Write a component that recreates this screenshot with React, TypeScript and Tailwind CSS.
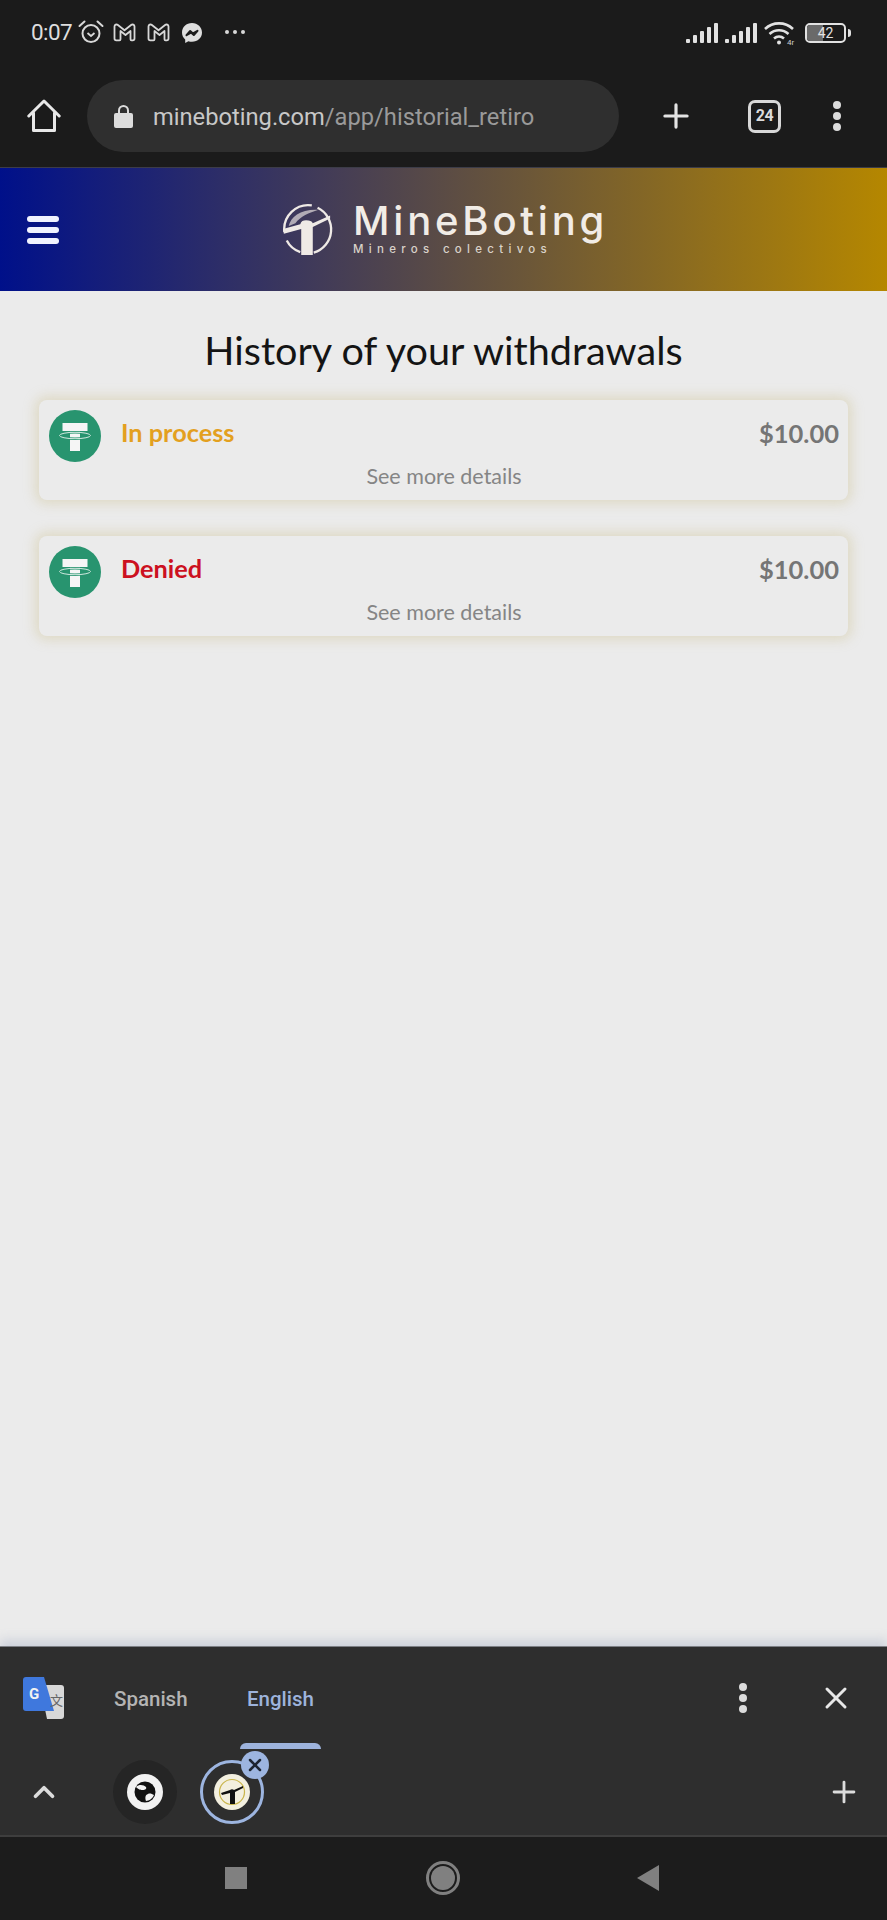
import { Plus, X, ChevronUp } from "lucide-react"

const roboto = "font-['Roboto',sans-serif]"

const GmailIcon = () => (
  <svg width="23" height="19" viewBox="0 0 23 19" fill="none" stroke="#d8d8d8" strokeWidth="1.8" strokeLinejoin="round">
    <path d="M1.5 3.5c0-1.8 2-2.6 3.4-1.5l6.6 5.2L18.100 2c1.400-1.100 3.400-.3 3.400 1.500V15.500c0 1-.8 1.800-1.800 1.800h-1.200c-.6 0-1-.4-1-1V8l-5 4-5-4v8.300c0 .6-.4 1-1 1H3.300c-1 0-1.800-.8-1.800-1.800z" />
  </svg>
)

const Signal = () => (
  <svg width="32" height="22" viewBox="0 0 32 22" fill="#e2e2e2">
    <rect x="0" y="17" width="4" height="4" rx="1" />
    <rect x="7" y="13" width="4" height="8" rx="1" />
    <rect x="14" y="9" width="4" height="12" rx="1" />
    <rect x="21" y="5" width="4" height="16" rx="1" />
    <rect x="28" y="1" width="4" height="20" rx="1" />
  </svg>
)

const StatusBar = () => (
  <div className={`h-[66px] flex items-center pl-[31px] pr-[36px] ${roboto}`}>
    <span className="text-[22.500px] text-[#dedede] w-[48px] tracking-tight">0:07</span>
    <svg width="26" height="26" viewBox="0 0 26 26" fill="none" stroke="#d8d8d8" strokeWidth="2" className="-ml-[1px] -mt-[3px]">
      <circle cx="13" cy="14.500" r="8.500" />
      <path d="M9.500 14l3.500 3 3.500-3" strokeWidth="1.800" />
      <path d="M1.500 7l5-4.500M24.500 7l-5-4.500" strokeLinecap="round" />
    </svg>
    <div className="ml-[9px] flex gap-[11px] -mt-[2px]">
      <GmailIcon />
      <GmailIcon />
    </div>
    <svg width="22" height="22" viewBox="0 0 22 22" className="ml-[11px]">
      <path fill="#dedede" d="M11 1C5.300 1 1 5.100 1 10.500c0 2.900 1.200 5.300 3.200 7v3.500l3.200-1.800c1.100.4 2.300.6 3.600.6 5.700 0 10-4.100 10-9.300S16.700 1 11 1z" />
      <path fill="none" stroke="#1b1b1b" strokeWidth="2" strokeLinejoin="round" d="M5.500 13.200l3.700-4.200 2.800 2.400 4.500-2.600-3.700 4.200-2.800-2.400z" />
    </svg>
    <div className="ml-[22px] flex gap-[4px] -mt-[3px]">
      <span className="w-[4px] h-[4px] rounded-full bg-[#d8d8d8]" />
      <span className="w-[4px] h-[4px] rounded-full bg-[#d8d8d8]" />
      <span className="w-[4px] h-[4px] rounded-full bg-[#d8d8d8]" />
    </div>
    <div className="ml-auto flex items-center">
      <Signal />
      <div className="w-[7px]" />
      <Signal />
      <svg width="34" height="26" viewBox="0 0 34 26" fill="none" stroke="#e2e2e2" strokeWidth="2.600" className="ml-[6px]">
        <path d="M2 9c8-7.500 20-7.500 28 0" />
        <path d="M6.500 14c5.500-5 13.500-5 19 0" />
        <path d="M11 18.500c3-2.500 7-2.500 10 0" />
        <circle cx="16" cy="22.500" r="2" fill="#e2e2e2" stroke="none" />
        <text x="24" y="25" fontSize="8" fill="#cfcfcf" stroke="none" fontFamily="Roboto, sans-serif">4r</text>
      </svg>
      <div className="ml-[8px] w-[41px] h-[20px] rounded-[5px] border-2 border-[#e2e2e2] relative flex items-center overflow-hidden">
        <div className="w-[16px] h-full bg-[#6a6a6a]" />
        <span className="absolute inset-0 flex items-center justify-center text-[14px] text-[#e2e2e2] leading-none">42</span>
      </div>
      <div className="ml-[2px] w-[3px] h-[8px] rounded-r-sm bg-[#e2e2e2]" />
    </div>
  </div>
)

const Toolbar = () => (
  <div className={`h-[100px] flex items-center pl-[27px] ${roboto}`}>
    <svg width="34" height="34" viewBox="0 0 34 34" fill="none" stroke="#e8e8e8" strokeWidth="3" strokeLinejoin="round" strokeLinecap="round">
      <path d="M1.800 17L17 2l15.200 15" />
      <path d="M6.500 14v17.500h21V14" />
    </svg>
    <div className="ml-[26px] w-[532px] h-[72px] rounded-full bg-[#2f2f2f] flex items-center pl-[27px]">
      <svg width="19" height="24" viewBox="0 0 19 24">
        <path fill="none" stroke="#dcdcdc" strokeWidth="2" d="M5 10V6.500a4.500 4.500 0 0 1 9 0V10" />
        <rect x="0" y="9" width="19" height="15" rx="2" fill="#dcdcdc" />
      </svg>
      <span className="ml-[20px] mt-[3px] text-[23.700px] leading-none text-[#c8c8c8]">
        mineboting.com<span className="text-[#9a9a9a]">/app/historial_retiro</span>
      </span>
    </div>
    <Plus size={38} strokeWidth={2} color="#e4e4e4" className="ml-[38px]" />
    <div className="ml-[53px] w-[33px] h-[33px] rounded-[7px] border-[3px] border-[#d8d8d8] flex items-center justify-center text-[16px] font-bold text-[#dcdcdc] leading-none tracking-tight">
      24
    </div>
    <div className="ml-[52px] flex flex-col gap-[3px]">
      <span className="w-[8px] h-[8px] rounded-full bg-[#dcdcdc]" />
      <span className="w-[8px] h-[8px] rounded-full bg-[#dcdcdc]" />
      <span className="w-[8px] h-[8px] rounded-full bg-[#dcdcdc]" />
    </div>
  </div>
)

const PickLogo = ({ size, fg }: { size: number; fg: string }) => (
  <svg width={size} height={size} viewBox="0 0 52 54" fill="none">
    <path d="M2.500 30A25 25 0 0 1 31 2.500" stroke={fg} strokeWidth="2.400" />
    <path d="M37 5A25 25 0 0 1 33 51.500" stroke={fg} strokeWidth="2.400" />
    <path d="M5 39c3 6 8 10 14 12" stroke={fg} strokeWidth="2.400" />
    <path d="M7 24C9 14 20 6 38 7 28 10 19 14 14 21z" fill={fg} opacity="0.65" />
    <path d="M1 27l18-5c1-3 3-4 6-4 4 0 6 1 7 3l18-8v3l-18 9v29c-4 1-8 1-12 0V27L2 32z" fill={fg} />
  </svg>
)

const Banner = () => (
  <div className="h-[124px] border-t border-[#3c3c48] bg-[linear-gradient(to_right,#00108a,#b58700)] flex items-center relative">
    <div className="absolute left-[27px] top-[48px] flex flex-col gap-[5px]">
      <span className="w-[32px] h-[6px] rounded-[3px] bg-[#f1f3ff]" />
      <span className="w-[32px] h-[6px] rounded-[3px] bg-[#f1f3ff]" />
      <span className="w-[32px] h-[6px] rounded-[3px] bg-[#f1f3ff]" />
    </div>
    <div className="ml-[281px] flex items-center gap-[20px] pb-[2px]">
      <PickLogo size={52} fg="#efeae6" />
      <div className="flex flex-col font-['Inter',sans-serif]">
        <span className="text-[40px] leading-[40px] font-medium tracking-[3.800px] text-[#f1ece6]">MineBoting</span>
        <span className="text-[11.500px] leading-[16px] tracking-[5.300px] font-medium text-[#d9d2c9]">Mineros colectivos</span>
      </div>
    </div>
  </div>
)

const TetherIcon = () => (
  <svg width="52" height="52" viewBox="0 0 52 52" className="shrink-0">
    <circle cx="26" cy="26" r="26" fill="#28946f" />
    <path fill="#f5f5f5" d="M13.500 13h25v8H31v20H21V21h-7.500z" />
    <ellipse cx="26" cy="25.500" rx="15.500" ry="3.200" fill="none" stroke="#28946f" strokeWidth="2.400" />
    <ellipse cx="26" cy="25.500" rx="15.500" ry="3.200" fill="none" stroke="#cfe8de" strokeWidth="1" />
  </svg>
)

type Withdrawal = { status: string; color: string }

const withdrawals: Withdrawal[] = [
  { status: "In process", color: "text-[#e3a01f]" },
  { status: "Denied", color: "text-[#cc1020]" },
]

const Card = ({ status, color }: Withdrawal) => (
  <div className="h-[100px] rounded-lg bg-[#ebebeb] shadow-[0_0_12px_4px_rgba(200,185,130,0.35)] pl-[10px] pr-[9px] pt-[10px] relative">
    <div className="flex items-start">
      <TetherIcon />
      <span className={`ml-[20px] mt-[7px] text-[25.300px] leading-[30px] font-bold ${color}`}>{status}</span>
      <span className="ml-auto mt-[8px] text-[25.500px] leading-[30px] font-bold text-[#757575]">$10.00</span>
    </div>
    <div className="text-center text-[21.500px] leading-[26px] text-[#858585] mt-[1px]">See more details</div>
  </div>
)

const Main = () => (
  <div className="flex-1 bg-[#ebebeb] px-[39px] font-['Lato',sans-serif]">
    <h1 className="pt-[36px] h-[109px] text-center text-[39.600px] leading-[46px] text-[#141414]">History of your withdrawals</h1>
    <div className="flex flex-col gap-[36px]">
      {withdrawals.map((w) => (
        <Card key={w.status} {...w} />
      ))}
    </div>
  </div>
)

const TranslateIcon = () => (
  <svg width="41" height="42" viewBox="0 0 41 42">
    <path d="M17 8h21a3 3 0 0 1 3 3v28a3 3 0 0 1-3 3H24z" fill="#d8d8d8" />
    <path d="M3 0h18l10 34H3a3 3 0 0 1-3-3V3a3 3 0 0 1 3-3z" fill="#3f78dd" />
    <text x="6" y="22" fontSize="15" fontWeight="700" fill="#f2f2f2" fontFamily="Roboto, sans-serif">G</text>
    <text x="27" y="28" fontSize="13" fill="#666666" fontFamily="Noto Sans CJK SC, sans-serif">文</text>
  </svg>
)

const TabStrip = () => (
  <div className={`h-[189px] bg-[#2e2e2e] border-t border-[#7d7f85] shadow-[0_-6px_10px_rgba(150,160,190,0.35)] relative ${roboto}`}>
    <div className="h-[102px] flex items-center pl-[23px]">
      <TranslateIcon />
      <span className="ml-[50px] w-[133px] text-[20.500px] font-medium text-[#b4b4b4] mt-[2px]">Spanish</span>
      <div className="h-full flex flex-col items-center justify-end w-[81px] -ml-[7px]">
        <span className="text-[20.500px] font-medium text-[#9db3dc] mb-[28px]">English</span>
        <span className="w-[81px] h-[6px] rounded-t-[6px] bg-[#9db3dc]" />
      </div>
      <div className="ml-auto flex flex-col gap-[3px] mr-[71px]">
        <span className="w-[8px] h-[8px] rounded-full bg-[#dcdcdc]" />
        <span className="w-[8px] h-[8px] rounded-full bg-[#dcdcdc]" />
        <span className="w-[8px] h-[8px] rounded-full bg-[#dcdcdc]" />
      </div>
      <X size={36} strokeWidth={2} color="#e8e8e8" className="mr-[33px]" />
    </div>
    <div className="h-[85px] flex items-center pl-[27px] pr-[27px]">
      <ChevronUp size={34} strokeWidth={2.600} color="#dcdcdc" />
      <div className="ml-[52px] w-[64px] h-[64px] rounded-full bg-[#252525] flex items-center justify-center">
        <svg width="36" height="36" viewBox="0 0 36 36">
          <circle cx="18" cy="18" r="18" fill="#f2f2f2" />
          <circle cx="18" cy="18" r="10.500" fill="#111111" />
          <path fill="#f2f2f2" d="M9 13c3-3 8-2 10 0 1 2-1 3-3 3s-4 0-7-3zM27 21c-1 3-5 6-8 6-1-3-1-6 2-7 2-1 4 0 6 1z" />
        </svg>
      </div>
      <div className="ml-[23px] w-[64px] h-[64px] rounded-full border-[3px] border-[#9db5e0] flex items-center justify-center relative">
        <svg width="36" height="36" viewBox="0 0 36 36">
          <circle cx="18" cy="18" r="18" fill="#f3efdf" />
          <circle cx="18" cy="18" r="12.500" fill="none" stroke="#c9b44a" strokeWidth="1.200" />
          <path fill="#111111" d="M7 19l9-3c1-1 3-1 4 0l9-4v2l-8 4v12h-5V19L8 21z" />
        </svg>
        <div className="absolute -right-[8px] -top-[12px] w-[28px] h-[28px] rounded-full bg-[#9db5e0] flex items-center justify-center">
          <X size={20} strokeWidth={3} color="#1d2533" />
        </div>
      </div>
      <Plus size={34} strokeWidth={2} color="#dcdcdc" className="ml-auto -mr-[1px]" />
    </div>
  </div>
)

const NavBar = () => (
  <div className="h-[85px] bg-[#1c1c1c] border-t-2 border-[#3e3e3e] relative flex items-center pb-[2px]">
    <div className="ml-[225px] w-[22px] h-[22px] bg-[#808080]" />
    <div className="ml-[179px] w-[34px] h-[34px] rounded-full border-[3px] border-[#808080] flex items-center justify-center">
      <span className="w-[24px] h-[24px] rounded-full bg-[#808080]" />
    </div>
    <svg width="22" height="26" viewBox="0 0 22 26" className="ml-[177px]">
      <path d="M22 0v26L0 13z" fill="#808080" />
    </svg>
  </div>
)

export default function App() {
  return (
    <div className="w-[887px] h-[1920px] flex flex-col bg-[#1b1b1b]">
      <StatusBar />
      <Toolbar />
      <div className="h-[1px]" />
      <Banner />
      <Main />
      <TabStrip />
      <NavBar />
    </div>
  )
}
